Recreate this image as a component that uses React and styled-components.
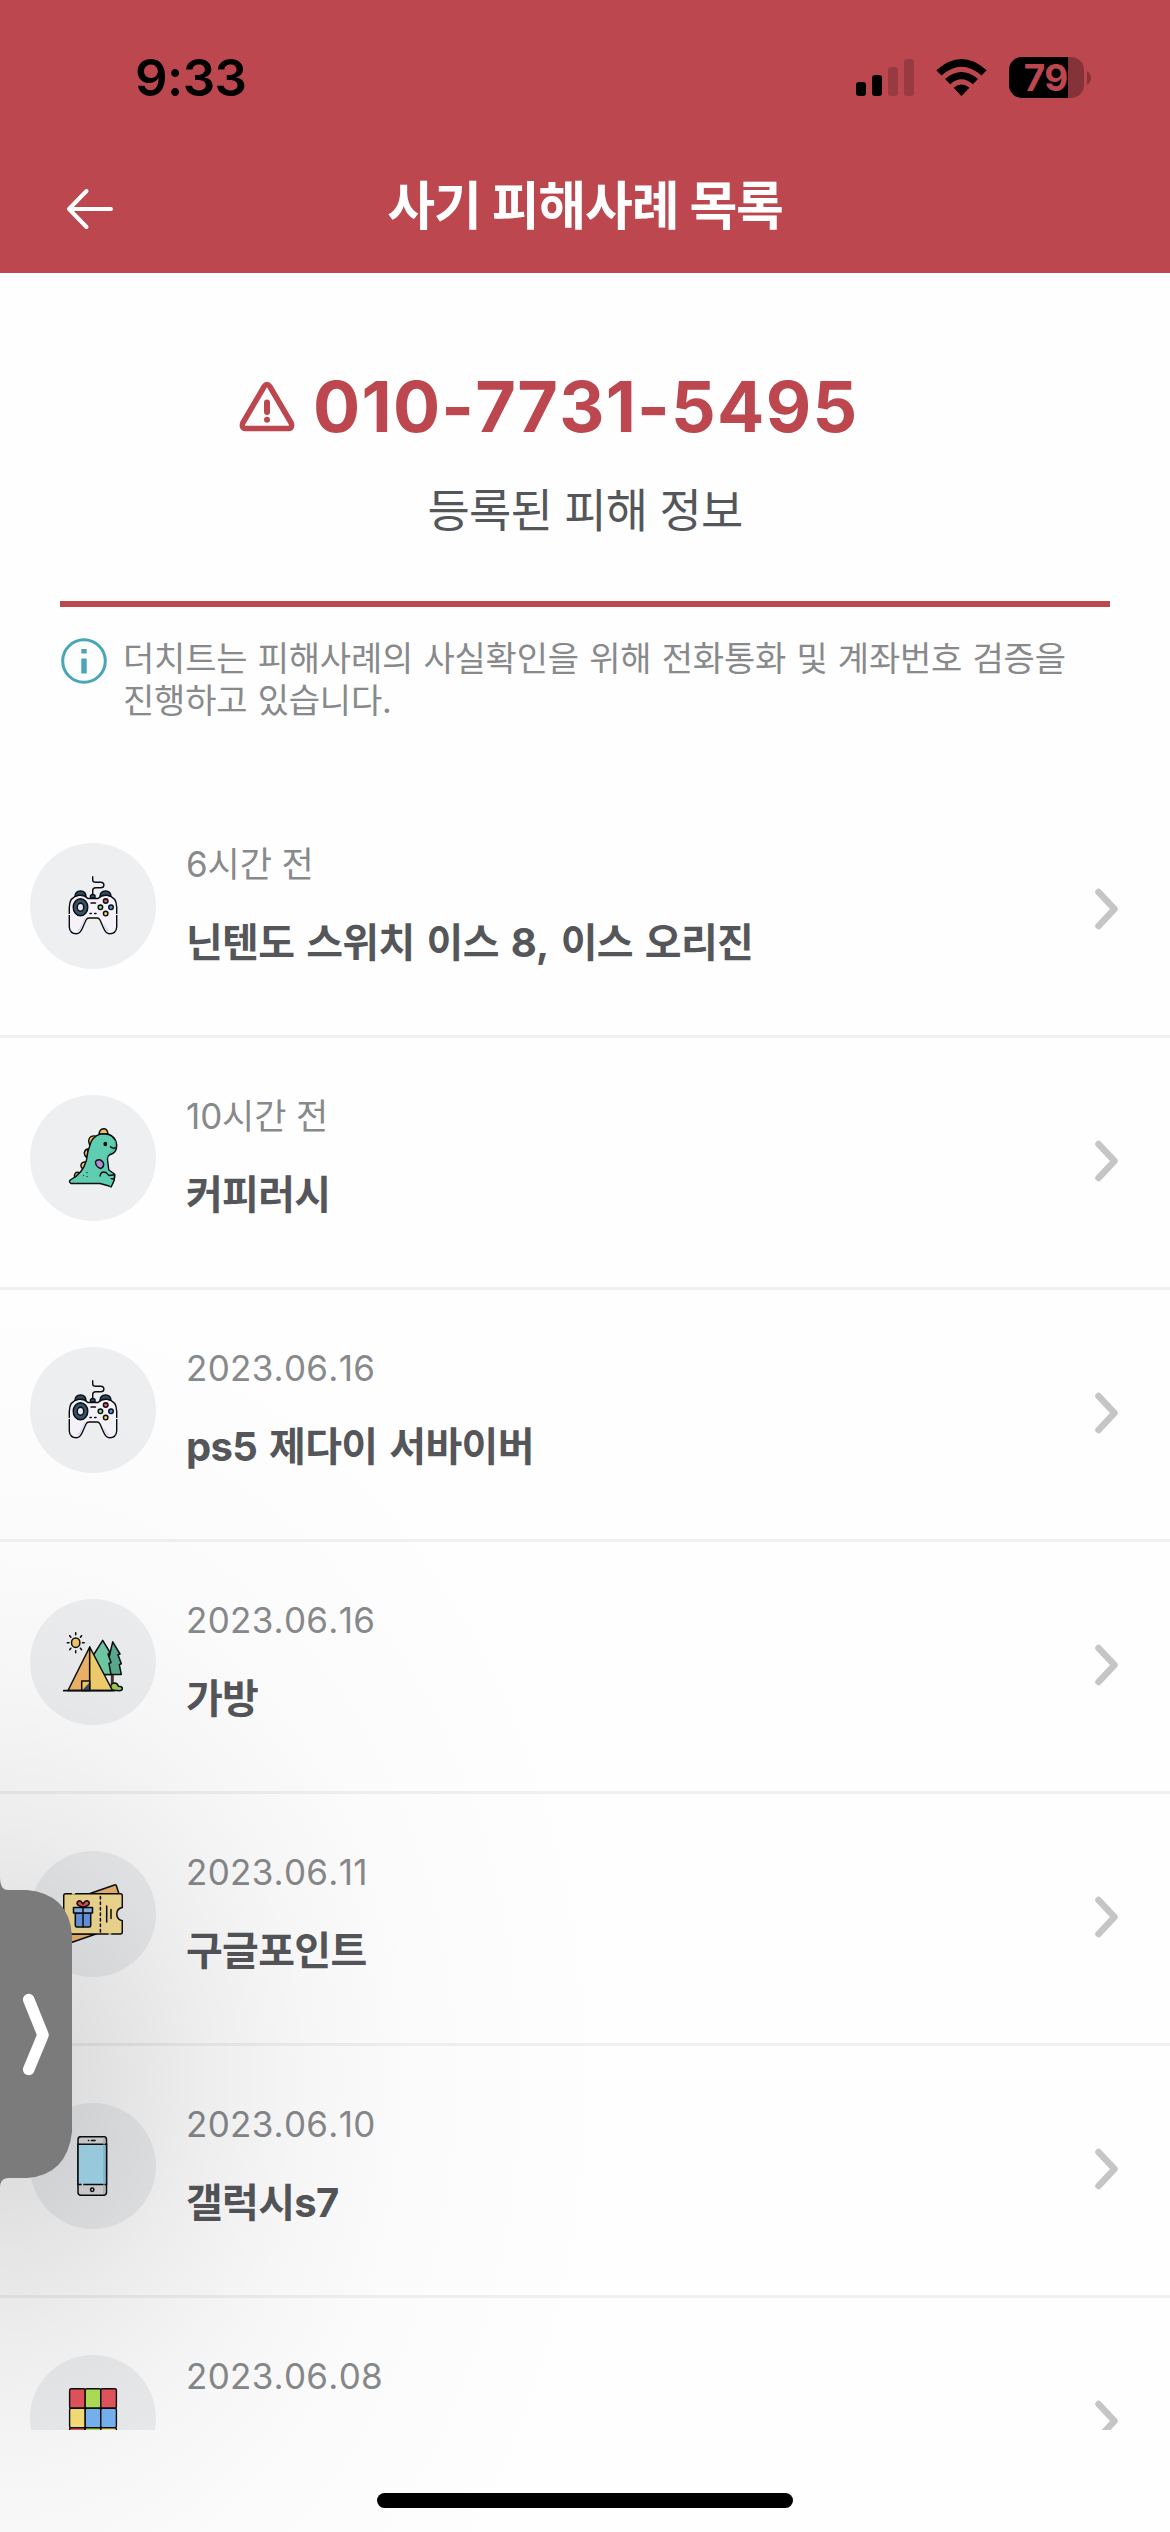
import styled, { createGlobalStyle } from "styled-components";

const RED = "#bd474f";

const GlobalStyle = createGlobalStyle`
  body {
    margin: 0;
    background-color: #fefefe;
    font-family: "Inter", "Noto Sans CJK KR", sans-serif;
    font-kerning: none;
  }
`;
const ScreenStyles = styled.div`
  position: relative;
  display: flex;
  flex-direction: column;
  width: 1170px;
  height: 2532px;
  overflow: hidden;
  background-color: #fefefe;
`;
const StatusBar = styled.div`
  display: flex;
  align-items: center;
  justify-content: space-between;
  height: 141px;
  padding: 14px 79px 0 135px;
  box-sizing: border-box;
  background-color: ${RED};
  & > .time {
    font-size: 51px;
    font-weight: 600;
    line-height: 60px;
    letter-spacing: -0.6px;
    color: #000000;
  }
  & > .indicators {
    display: flex;
    align-items: center;
    gap: 22px;
  }
`;
const Battery = styled.div`
  display: flex;
  align-items: center;
  gap: 3px;
  & > .level {
    display: flex;
    align-items: center;
    justify-content: center;
    width: 75px;
    height: 41px;
    padding-right: 2px;
    box-sizing: border-box;
    border-radius: 13px;
    background: linear-gradient(90deg, #000000 59px, #853338 59px);
    font-size: 37px;
    font-weight: 700;
    line-height: 41px;
    letter-spacing: -1px;
    color: ${RED};
  }
`;
const NavBar = styled.header`
  display: grid;
  grid-template-columns: 120px 1fr 120px;
  align-items: center;
  height: 132px;
  box-sizing: border-box;
  background-color: ${RED};
  & > svg {
    margin: 4px 0 0 65px;
  }
  & > h1 {
    margin: 0;
    text-align: center;
    font-size: 52px;
    font-weight: 700;
    line-height: 76px;
    letter-spacing: -1.2px;
    color: #ffffff;
  }
`;
const Content = styled.main`
  flex: 1;
  min-height: 0;
  overflow: hidden;
`;
const Summary = styled.section`
  height: 334px;
  margin: 0 60px;
  box-sizing: border-box;
  border-bottom: 6px solid ${RED};
  & > .phone {
    display: flex;
    align-items: center;
    gap: 17px;
    height: 90px;
    padding: 89px 0 0 178px;
  }
  & > .phone > span {
    font-size: 70px;
    font-weight: 700;
    line-height: 90px;
    letter-spacing: 1.25px;
    white-space: nowrap;
    color: ${RED};
  }
  & > p {
    margin: 23px 0 0;
    text-align: center;
    font-size: 46px;
    line-height: 70px;
    letter-spacing: -0.8px;
    color: #55565a;
  }
`;
const Notice = styled.section`
  display: flex;
  gap: 15px;
  height: 179px;
  padding: 30px 60px 0;
  box-sizing: border-box;
  & > svg {
    flex: none;
  }
  & > p {
    margin: 1px 0 0;
    white-space: pre;
    font-size: 34px;
    line-height: 42px;
    letter-spacing: -0.2px;
    word-spacing: 1px;
    color: #88898b;
  }
`;
const CaseItem = styled.li`
  display: flex;
  height: 252px;
  padding: 57px 50px 0 30px;
  box-sizing: border-box;
  border-bottom: 3px solid #f0f0f1;
  & > .avatar {
    display: flex;
    align-items: center;
    justify-content: center;
    flex: none;
    width: 126px;
    height: 126px;
    border-radius: 50%;
    background-color: #eeeff1;
  }
  & > .text {
    flex: 1;
    padding-left: 30px;
    white-space: nowrap;
  }
  & > .chevron {
    margin-top: 44px;
  }
`;
const CaseList = styled.ul`
  margin: 0;
  padding: 0;
  list-style: none;
`;
const CaseDate = styled.div`
  margin-top: -4px;
  font-size: 35px;
  line-height: 50px;
  letter-spacing: ${(props) => (props.$ago ? "-0.1px" : "0.3px")};
  color: #88898b;
`;
const CaseTitle = styled.div`
  margin-top: 26px;
  font-size: 40px;
  font-weight: 700;
  line-height: 56px;
  letter-spacing: -0.7px;
  word-spacing: 3.2px;
  color: #55565a;
`;
const HomeArea = styled.footer`
  display: flex;
  justify-content: center;
  height: 102px;
  padding-top: 63px;
  box-sizing: border-box;
  & > div {
    width: 416px;
    height: 15px;
    border-radius: 8px;
    background-color: #000000;
  }
`;
const DrawerShade = styled.div`
  position: absolute;
  left: 0;
  top: 1280px;
  width: 620px;
  height: 1252px;
  pointer-events: none;
  background: radial-gradient(
    ellipse 620px 800px at 0 800px,
    rgba(0, 0, 0, 0.145) 0%,
    rgba(0, 0, 0, 0.125) 12%,
    rgba(0, 0, 0, 0.094) 23%,
    rgba(0, 0, 0, 0.062) 34%,
    rgba(0, 0, 0, 0.03) 50%,
    rgba(0, 0, 0, 0.01) 68%,
    rgba(0, 0, 0, 0) 100%
  );
`;
const DrawerHandle = styled.button`
  position: absolute;
  left: 0;
  top: 1877px;
  width: 72px;
  height: 312px;
  padding: 0;
  border: none;
  background: none;
  & > svg {
    display: block;
  }
`;

const GamepadIcon = () => (
  <svg width="60" height="60" viewBox="0 0 60 60" fill="none" stroke="#0b0c0e" strokeWidth="1.4" strokeLinecap="round">
    <path d="M29.7.7V4q0 2.2 3 2.2h5q3.2 0 3.2 2.8t-3.2 2.8h-5q-3 0-3 3V19" />
    <path d="M12 21q0-6 5.500-6T23 21z" fill="#2f4c63" />
    <path d="M37 21q0-6 5.500-6T48 21z" fill="#2f4c63" />
    <path d="M27.500 22v-2.500q2.300-2 4.500 0V22z" fill="#2f5b91" />
    <path d="M16 19.300q5-.6 9 3.200h10q4-3.800 9-3.200 9.700 1.700 9.700 12V51q-.5 6.700-7.200 6.700-3.500 0-5.500-4.700l-4-9q-1-2-3-2h-8q-2 0-3 2l-4 9q-2 4.700-5.500 4.700-6.700 0-7.200-6.700V31.300q0-10.300 9.700-12z" fill="#f5f3f9" />
    <path d="M15 54.500q2.500-1.500 4-5.500l3-6.500M45 54.500q-2.500-1.500-4-5.500" stroke="#dcd8ec" strokeWidth="1.600" />
    <path d="M5 38.500h2.500M52.500 38.500H55" stroke="#f4f1f8" strokeWidth="1" />
    <ellipse cx="17.500" cy="31.300" rx="7.300" ry="8.500" fill="#34536b" />
    <ellipse cx="17.500" cy="31.300" rx="3.200" ry="4" fill="#e8e7ee" />
    <path d="M28 27h4.500M27 37.500h1.300M31.700 37.500H33" strokeWidth="1.500" />
    <circle cx="42.700" cy="25" r="2.300" fill="#e25a60" />
    <circle cx="48" cy="31.300" r="2.300" fill="#4a94e8" />
    <circle cx="37.400" cy="31.300" r="2.300" fill="#8bd08b" />
    <circle cx="42.700" cy="37.600" r="2.300" fill="#eacb5d" />
  </svg>
);
const DinoIcon = () => (
  <svg width="60" height="60" viewBox="0 0 60 60" fill="none" stroke="#0b0c0e" strokeWidth="1.4" strokeLinecap="round" strokeLinejoin="round">
    <path d="M36 6q.5-5 4.500-5.300T45 6zM27 18q-3-7 1-9.500 4-1.500 5.500.5zM24 30q-3.500-3-2.500-6t3.500-3zM21 42q-4.500-3-2.500-6.500 2-2.500 5-1zM12 50q-1.500-3.500 1-5.500 3-.8 5 1.500z" fill="#eec157" />
    <path d="M40.500 5.700q12 .3 13.200 11.300.2 7.500-6.200 9.500-3.300 1-3 5l1.300 10.500 5.700 4q1 5-3.500 12.500l-11-3H8q-2.500-1.500-.8-3.500Q20 45.500 23.500 32q1-9.500 4.700-18.500 4-7.500 12.300-7.800z" fill="#5fcdb2" />
    <path d="M52 13q1.500 8-5 12-3 2-3.500 6" stroke="#44ad96" strokeWidth="1" />
    <path d="M37 48q1-5.500 6-3.500l3 3 5.700-.8-.6 5.800-3 6.500M50.700 51l-2.500-.4" fill="#5fcdb2" />
    <path d="M32.500 34.500q0-3 4.200-2.800 4 1.800 4 5.300-.8 3-3.200 3.500-4.500-1.500-5-6z" fill="#b58ad8" />
    <ellipse cx="42.300" cy="16" rx="1.200" ry="1.500" fill="#0b0c0e" />
    <path d="M47.500 18.800q2 2 5 1" />
    <path d="M20.500 47.500v.1M24 44.500v.1M24 48.500v.1" strokeWidth="1.200" />
  </svg>
);
const TentIcon = () => (
  <svg width="60" height="60" viewBox="0 0 60 60" fill="none" stroke="#0b0c0e" strokeWidth="1.500" strokeLinecap="round" strokeLinejoin="round">
    <ellipse cx="12.700" cy="10.700" rx="4.200" ry="4.800" fill="#f2c967" />
    <path d="M12.700.8v2M12.700 18.700v2M4.300 10.700H6M19.500 10.700h1.700M6.700 3.700l1.200 1.500M18.600 3.700l-1.200 1.500M6.700 17.700l1.200-1.500M18.600 17.700l-1.200-1.500" />
    <path d="M49.300 42v10" stroke="#4d3428" strokeWidth="3" />
    <path d="M49.700 9.800 57 22l-2 .8 3.300 9-2 .8 2 9.800H42z" fill="#58ab90" />
    <path d="M39.700 8.300 47 20.500l-2 1.500 3 8.500-2 1 2 11H38L28 27z" fill="#6fcba5" />
    <path d="M48 58q-1.500-6.500 3.300-7 3.300-.2 4 3.200 4.200 0 4.200 2.800-.5 1.700-3 1.700z" fill="#9fcb56" />
    <path d="M26.700 15 5 58.500h21.700z" fill="#efb569" />
    <path d="M26.700 15v43.500H49.500z" fill="#f3cf6d" />
    <path d="M18.700 49h8v9.500h-8z" fill="#f2c967" />
    <path d="M26 51v7.500h-7z" fill="#44466b" stroke="none" />
    <path d="M.7 58.700h50.500" strokeWidth="1.800" />
  </svg>
);
const TicketIcon = () => (
  <svg width="60" height="60" viewBox="0 0 60 60" fill="none" stroke="#0b0c0e" strokeWidth="1.500" strokeLinecap="round" strokeLinejoin="round">
    <path d="M27 9.500 51.500 1q1.500-.5 2 1L56 10zM33 50 7 59l-3-9z" fill="#f1b671" />
    <path d="M2.500 9.800h55q1.800 0 1.800 2V23.500q-5.500 1-5.500 6.500t5.500 6.700V48q0 2-1.800 2h-55Q.7 50 .7 48V11.800q0-2 1.800-2z" fill="#fbe297" />
    <path d="M37.400 12.500v36" strokeDasharray="2.500 3" />
    <path d="M43.700 22v16M48 25.500v9" />
    <path d="M9.500 9.800h2M46 50h1.700" stroke="#fbe297" />
    <path d="M20 23q-6-1-6-4 1-3.300 4-1.600L20 20l2-2.600q3.500-1.700 4.300 1.600 0 3-6.300 4z" fill="#e65156" />
    <path d="M12.300 29h15.400v12.500q0 1.500-1.500 1.500H13.800q-1.500 0-1.500-1.500z" fill="#6c9bea" />
    <path d="M10.500 23.500h19V29h-19z" fill="#8eb8f3" />
    <path d="M20 24v19" />
  </svg>
);
const PhoneIcon = () => (
  <svg width="60" height="60" viewBox="0 0 60 60" fill="none" stroke="#0b0c0e" strokeWidth="1.500" strokeLinecap="round">
    <rect x="15" y=".7" width="28.500" height="58.600" rx="3" fill="#dededf" />
    <path d="M15 8.200h28.500v40.300H15z" fill="#a9e1f6" />
    <path d="M41 9v39" stroke="#8ac8e0" />
    <path d="M41 2v5.500M41 49.500v8" stroke="#bfbfc1" />
    <path d="M28.500 4.500h3.500M25.500 4.500h.1" strokeWidth="1.600" />
    <circle cx="29.200" cy="53.800" r="1.700" />
    <path d="M19.500 47.700v1.300" stroke="#dff2f8" />
  </svg>
);
const CUBE_COLORS = ["#e8565e", "#b1e359", "#e8565e", "#fbe379", "#78b6f7", "#78b6f7", "#e8565e", "#b1e359", "#fbe379"];
const CubeIcon = () => (
  <svg width="60" height="60" viewBox="0 0 60 60" stroke="#0b0c0e" strokeWidth="1.400">
    {CUBE_COLORS.map((color, index) => (
      <rect
        key={index}
        x={6.6 + (index % 3) * 15.6}
        y={0.7 + Math.floor(index / 3) * 19.5}
        width="15.600"
        height="19.500"
        rx="1.500"
        fill={color}
      />
    ))}
  </svg>
);
const ArrowLeftIcon = () => (
  <svg width="50" height="44" viewBox="0 0 50 44" fill="none" stroke="#ffffff" strokeWidth="4" strokeLinecap="round" strokeLinejoin="round">
    <path d="M46 22H4M21.500 4 4 22l17.500 18" />
  </svg>
);
const WarningIcon = () => (
  <svg width="58" height="52" viewBox="0 0 58 52" fill="none" stroke={RED} strokeWidth="5.500" strokeLinecap="round" strokeLinejoin="round">
    <path d="M26.200 5.500 4.800 42q-1.600 5.300 2.700 5.500h43q4.300-.2 2.700-5.500L31.800 5.500q-2.800-4-5.600 0z" />
    <path d="M29 21.500v9.500" strokeWidth="6" />
    <circle cx="29" cy="38.800" r="3" fill={RED} stroke="none" />
  </svg>
);
const InfoIcon = () => (
  <svg width="48" height="48" viewBox="0 0 48 48" fill="none">
    <circle cx="24" cy="24" r="21.300" stroke="#48a6b6" strokeWidth="3" />
    <path d="M21.300 12h5.400v4.600h-5.400zM21.300 21.500h5.400v15h-5.400z" fill="#48a6b6" />
  </svg>
);
const ChevronIcon = () => (
  <svg className="chevron" width="28" height="44" viewBox="0 0 28 44" fill="none" stroke="#c5c5c6" strokeWidth="6.500" strokeLinecap="round" strokeLinejoin="round">
    <path d="M6.500 5l16 17-16 17" />
  </svg>
);

const cases = [
  { date: "6시간 전", title: "닌텐도 스위치 이스 8, 이스 오리진", icon: <GamepadIcon />, ago: true },
  { date: "10시간 전", title: "커피러시", icon: <DinoIcon />, ago: true },
  { date: "2023.06.16", title: "ps5 제다이 서바이버", icon: <GamepadIcon /> },
  { date: "2023.06.16", title: "가방", icon: <TentIcon /> },
  { date: "2023.06.11", title: "구글포인트", icon: <TicketIcon /> },
  { date: "2023.06.10", title: "갤럭시s7", icon: <PhoneIcon /> },
  { date: "2023.06.08", title: "", icon: <CubeIcon /> },
];

const App = () => {
  return (
    <ScreenStyles>
      <GlobalStyle />
      <StatusBar>
        <span className="time">9:33</span>
        <div className="indicators">
          <svg width="58" height="38" viewBox="0 0 58 38">
            <rect x="0" y="23" width="10" height="14" rx="3" />
            <rect x="16" y="16" width="10" height="21" rx="3" />
            <rect x="32" y="8" width="10" height="29" rx="3" fill="#973a41" />
            <rect x="48" y="0" width="10" height="37" rx="3" fill="#973a41" />
          </svg>
          <svg width="51" height="38" viewBox="0 0 51 38">
            <path d="M.3 11.300Q25.500-11.300 50.700 11.300L45.500 16.500Q25.500-1 5.500 16.500z" />
            <path d="M9 20Q25.500 6 42 20L36.800 25.200Q25.500 15.500 14.200 25.200z" />
            <path d="M17.600 28.700Q25.500 22.300 33.400 28.700L25.500 37z" />
          </svg>
          <Battery>
            <div className="level">79</div>
            <svg width="4" height="14" viewBox="0 0 4 14">
              <path d="M0 0q4 3 4 7t-4 7z" fill="#853338" />
            </svg>
          </Battery>
        </div>
      </StatusBar>
      <NavBar>
        <ArrowLeftIcon />
        <h1>사기 피해사례 목록</h1>
      </NavBar>
      <Content>
        <Summary>
          <div className="phone">
            <WarningIcon />
            <span>010-7731-5495</span>
          </div>
          <p>등록된 피해 정보</p>
        </Summary>
        <Notice>
          <InfoIcon />
          <p>{"더치트는 피해사례의 사실확인을 위해 전화통화 및 계좌번호 검증을\n진행하고 있습니다."}</p>
        </Notice>
        <CaseList>
          {cases.map((item, index) => (
            <CaseItem key={index}>
              <div className="avatar">{item.icon}</div>
              <div className="text">
                <CaseDate $ago={item.ago}>{item.date}</CaseDate>
                <CaseTitle>{item.title}</CaseTitle>
              </div>
              <ChevronIcon />
            </CaseItem>
          ))}
        </CaseList>
      </Content>
      <HomeArea>
        <div />
      </HomeArea>
      <DrawerShade />
      <DrawerHandle>
        <svg width="72" height="312" viewBox="0 0 72 312">
          <path d="M0 0q0 13 8 13h19q42 4 45 45v197q-5 43-45 46H8q-8 0-8 10z" fill="#7b7b7b" />
          <path
            d="M28.700 122.500 43 158 28.700 192.500"
            fill="none"
            stroke="#ffffff"
            strokeWidth="11.500"
            strokeLinecap="round"
            strokeLinejoin="round"
          />
        </svg>
      </DrawerHandle>
    </ScreenStyles>
  );
};
export default App;
